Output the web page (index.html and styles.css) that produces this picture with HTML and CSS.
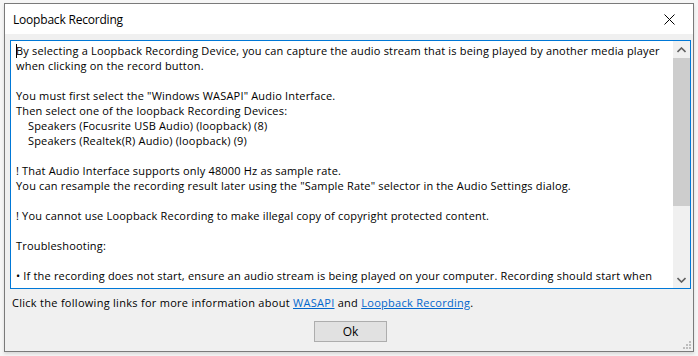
FILE: index.html
```html
<!DOCTYPE html>
<html lang="en">
  <head>
    <meta charset="UTF-8" />
    <title>Loopback Recording</title>
    <link rel="stylesheet" href="styles.css">
  </head>
  <body>
    <div class="window">
      <div class="titlebar">
        <span class="title">Loopback Recording</span>
        <button class="close" type="button" aria-label="Close">
          <svg width="11" height="11" viewBox="0 0 11 11">
            <path d="M0.5 0.5 L10.5 10.5 M10.5 0.5 L0.5 10.5" stroke="#000" stroke-width="1" fill="none"/>
          </svg>
        </button>
      </div>

      <div class="dialog">
        <div class="textbox">
          <div class="text">
            <p><span class="caret"></span>By selecting a Loopback Recording Device, you can capture the audio stream that is being played by another media player</p>
            <p>when clicking on the record button.</p>
            <p>&nbsp;</p>
            <p>You must first select the "Windows WASAPI" Audio Interface.</p>
            <p>Then select one of the loopback Recording Devices:</p>
            <p class="indent">Speakers (Focusrite USB Audio) (loopback) (8)</p>
            <p class="indent">Speakers (Realtek(R) Audio) (loopback) (9)</p>
            <p>&nbsp;</p>
            <p>! That Audio Interface supports only 48000 Hz as sample rate.</p>
            <p>You can resample the recording result later using the "Sample Rate" selector in the Audio Settings dialog.</p>
            <p>&nbsp;</p>
            <p>! You cannot use Loopback Recording to make illegal copy of copyright protected content.</p>
            <p>&nbsp;</p>
            <p>Troubleshooting:</p>
            <p>&nbsp;</p>
            <p>• If the recording does not start, ensure an audio stream is being played on your computer. Recording should start when</p>
          </div>
          <div class="scrollbar">
            <div class="arrow">
              <svg width="9" height="6" viewBox="0 0 9 6"><path d="M0.5 5 L4.5 1 L8.5 5" stroke="#606060" stroke-width="1.6" fill="none"/></svg>
            </div>
            <div class="track"><div class="thumb"></div></div>
            <div class="arrow">
              <svg width="9" height="6" viewBox="0 0 9 6"><path d="M0.5 1 L4.5 5 L8.5 1" stroke="#606060" stroke-width="1.6" fill="none"/></svg>
            </div>
          </div>
        </div>

        <p class="links">Click the following links for more information about <a href="#">WASAPI</a> and <a href="#">Loopback Recording</a>.</p>

        <div class="buttons">
          <button class="ok" type="button">Ok</button>
        </div>

        <div class="grip">
          <svg width="9" height="9" viewBox="0 0 9 9" fill="#bdbdbd">
            <rect x="6" y="0" width="2" height="2"/>
            <rect x="3" y="3" width="2" height="2"/>
            <rect x="6" y="3" width="2" height="2"/>
            <rect x="0" y="6" width="2" height="2"/>
            <rect x="3" y="6" width="2" height="2"/>
            <rect x="6" y="6" width="2" height="2"/>
          </svg>
        </div>
      </div>
    </div>
  </body>
</html>
```

FILE: styles.css
```css
* {
  margin: 0;
  padding: 0;
  box-sizing: border-box;
}

body {
  font-family: 'Open Sans', 'Noto Sans', sans-serif;
  font-size: 11px;
  color: #000;
  background-color: #f6f6f6;
  padding: 3px 4px 0 4px;
  width: 698px;
  height: 356px;
  overflow: hidden;
}

.window {
  width: 690px;
  height: 349px;
  border: 1px solid #7a7a7a;
  background-color: #f0f0f0;
  box-shadow: 0 2px 3px rgba(0, 0, 0, 0.12);
  display: flex;
  flex-direction: column;
}

.titlebar {
  height: 30px;
  background-color: #fff;
  display: flex;
  align-items: center;
  justify-content: space-between;
  padding-left: 8px;
}

.title {
  font-size: 12px;
  letter-spacing: -0.2px;
}

.close {
  width: 44px;
  height: 30px;
  border: none;
  background: none;
  display: flex;
  align-items: center;
  justify-content: center;
  margin-right: 2px;
}

.dialog {
  flex: 1;
  display: flex;
  flex-direction: column;
  padding: 6px 2px 0 5px;
  position: relative;
}

.textbox {
  height: 249px;
  border: 1px solid #0078d7;
  background-color: #fff;
  display: flex;
  overflow: hidden;
}

.text {
  flex: 1;
  padding: 2px 0 0 5px;
  line-height: 15px;
  letter-spacing: 0.18px;
  white-space: nowrap;
  overflow: hidden;
  color: #000;
}

.indent {
  padding-left: 12px;
}

.caret {
  display: inline-block;
  width: 1px;
  height: 14px;
  background-color: #000;
  vertical-align: -3px;
  margin-right: -1px;
}

.scrollbar {
  width: 17px;
  background-color: #f0f0f0;
  display: flex;
  flex-direction: column;
}

.arrow {
  height: 17px;
  display: flex;
  align-items: center;
  justify-content: center;
}

.track {
  flex: 1;
}

.thumb {
  height: 148px;
  background-color: #cdcdcd;
}

.links {
  margin: 6px 0 0 2px;
  line-height: 15px;
  letter-spacing: 0.28px;
}

.links a {
  color: #0066cc;
}

.buttons {
  display: flex;
  justify-content: center;
  margin-top: 11px;
}

.ok {
  width: 73px;
  height: 21px;
  background-color: #e1e1e1;
  border: 1px solid #adadad;
  font-family: inherit;
  font-size: 12px;
  color: #000;
}

.grip {
  position: absolute;
  right: 1px;
  bottom: 1px;
  line-height: 0;
}
```
